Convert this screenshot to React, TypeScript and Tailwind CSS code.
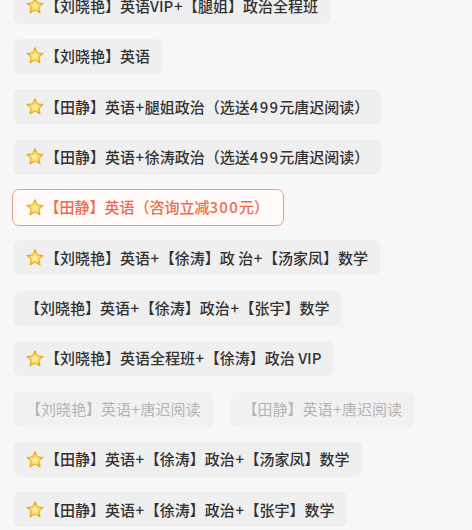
import React from 'react';

type Chip = {
  text: string;
  star?: boolean;
  selected?: boolean;
  disabled?: boolean;
};

const rows: Chip[][] = [
  [{ text: '【刘晓艳】英语VIP+【腿姐】政治全程班', star: true }],
  [{ text: '【刘晓艳】英语', star: true }],
  [{ text: '【田静】英语+腿姐政治（选送499元唐迟阅读）', star: true }],
  [{ text: '【田静】英语+徐涛政治（选送499元唐迟阅读）', star: true }],
  [{ text: '【田静】英语（咨询立减300元）', star: true, selected: true }],
  [{ text: '【刘晓艳】英语+【徐涛】政 治+【汤家凤】数学', star: true }],
  [{ text: '【刘晓艳】英语+【徐涛】政治+【张宇】数学' }],
  [{ text: '【刘晓艳】英语全程班+【徐涛】政治 VIP', star: true }],
  [
    { text: '【刘晓艳】英语+唐迟阅读', disabled: true },
    { text: '【田静】英语+唐迟阅读', disabled: true },
  ],
  [{ text: '【田静】英语+【徐涛】政治+【汤家凤】数学', star: true }],
  [{ text: '【田静】英语+【徐涛】政治+【张宇】数学', star: true }],
];

const StarIcon: React.FC<{ id: string }> = ({ id }) => (
  <svg width="20" height="20" viewBox="0 0 20 20" className="shrink-0">
    <defs>
      <radialGradient id={id} cx="50%" cy="55%" r="55%">
        <stop offset="0%" stopColor="#fff6b8" />
        <stop offset="55%" stopColor="#fcd34d" />
        <stop offset="100%" stopColor="#eea10a" />
      </radialGradient>
    </defs>
    <path
      d="M10 1.6 L12.4 6.9 L18.2 7.5 L13.9 11.3 L15.1 17 L10 14.1 L4.9 17 L6.1 11.3 L1.8 7.5 L7.6 6.9 Z"
      fill={`url(#${id})`}
      stroke="#e2a013"
      strokeWidth="0.9"
      strokeLinejoin="round"
    />
  </svg>
);

// digits and "+" sit a touch wider in the original font
const Label: React.FC<{ text: string }> = ({ text }) => (
  <span className="whitespace-pre">
    {text.split(/(\d+|\+)/).map((part, i) =>
      part === '+' ? (
        <span key={i} className="mx-[0.6px]">+</span>
      ) : /^\d+$/.test(part) ? (
        <span key={i} className="tracking-[1.3px]">{part}</span>
      ) : (
        part
      ),
    )}
  </span>
);

const ChipItem: React.FC<{ chip: Chip; id: string }> = ({ chip, id }) => {
  if (chip.selected) {
    return (
      <div className="-mx-[2px] -my-px flex h-[37px] items-center rounded-[7px] border-[1.5px] border-[#ef9a85] bg-[#fff9f7] pl-[11.5px] pr-[14px] text-[15px] font-medium text-[#ee6b4d]">
        <StarIcon id={id} />
        <Label text={chip.text} />
      </div>
    );
  }
  return (
    <div
      className={
        chip.disabled
          ? 'flex h-[35px] items-center rounded-[6px] bg-[#f1f1f1] pl-[12px] pr-[12px] text-[15px] text-[#b4b4b4]'
          : 'flex h-[35px] items-center rounded-[6px] bg-[#efefef] pl-[11px] pr-[12px] text-[15px] font-medium text-[#333333]'
      }
    >
      {chip.star && <StarIcon id={id} />}
      <Label text={chip.text} />
    </div>
  );
};

export default function App() {
  return (
    <div
      className="h-screen overflow-hidden bg-[#f7f7f7]"
      style={{ fontFamily: '"Noto Sans CJK SC", "Noto Sans", sans-serif' }}
    >
      <div className="-mt-[11.5px] flex flex-col gap-[15.4px] px-[14px]">
        {rows.map((row, i) => (
          <div key={i} className="flex items-start gap-[18px]">
            {row.map((chip, j) => (
              <ChipItem key={j} chip={chip} id={`star-${i}-${j}`} />
            ))}
          </div>
        ))}
      </div>
    </div>
  );
}
